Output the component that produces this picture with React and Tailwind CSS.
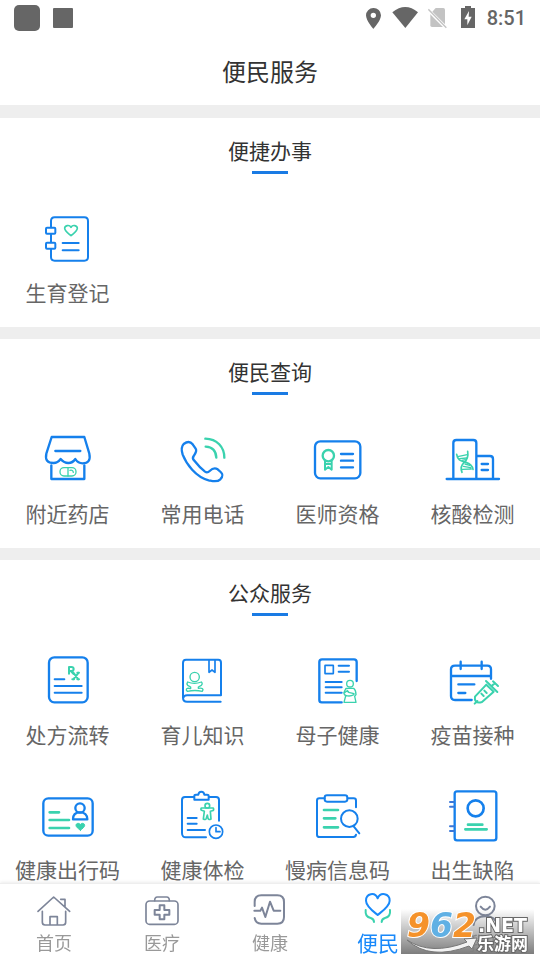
const BLUE = '#1580ec'
const GREEN = '#3ad2ae'

function ServiceIcon({ viewBox, children }) {
  return (
    <svg
      viewBox={viewBox}
      className="h-[61px] w-[61px]"
      fill="none"
      stroke={BLUE}
      strokeWidth="7"
      strokeLinecap="round"
      strokeLinejoin="round"
      aria-hidden="true"
    >
      {children}
    </svg>
  )
}

const BirthIcon = () => (
  <ServiceIcon viewBox="111 267 183 183">
    <path d="M153 322V303q0-11 11-11h89q11 0 11 11v108q0 11-11 11h-89q-11 0-11-11v-24M153 342v25" strokeWidth="6" />
    <rect x="138" y="323" width="28" height="18" rx="3" strokeWidth="6" />
    <rect x="138" y="368" width="28" height="18" rx="3" strokeWidth="6" />
    <path d="M188 369h48M188 391h48" strokeWidth="6" />
    <path d="M213 347c-8-7-19-14-19-22c0-9 14-12 19-3c5-9 19-6 19 3c0 8-11 15-19 22z" stroke={GREEN} strokeWidth="5" />
  </ServiceIcon>
)

const PharmacyIcon = () => (
  <ServiceIcon viewBox="111 30 183 183">
    <path d="M155 51h98l15 50q6 29-20 29-14 0-22-13-8 12-21 12t-23-12q-9 12-21 12-28 0-22-28z" />
    <path d="M154 136v41h99v-41M166 93h75" />
    <rect x="180" y="143" width="48" height="25" rx="12" stroke={GREEN} strokeWidth="4" />
    <path d="M204 143v25M210 151q9-2 10 6" stroke={GREEN} strokeWidth="4" />
  </ServiceIcon>
)

const PhoneIcon = () => (
  <ServiceIcon viewBox="516 30 183 183">
    <path d="M551 72c12-9 20-8 27 1l9 13c5 7-1 15-6 22q-5 7 1 13 17 22 33 34 7 5 14-2c10-10 18-9 24-5l9 8c9 8 6 14-1 22-10 10-24 5-35 3-39-10-67-49-78-77-4-13-6-23 3-32z" />
    <path d="M616 56c35 1 57 25 57 57M617 80c20 1 31 14 32 33" stroke={GREEN} />
  </ServiceIcon>
)

const DoctorIcon = () => (
  <ServiceIcon viewBox="111 30 183 183">
    <rect x="135" y="64" width="136" height="111" rx="16" />
    <path d="M213 102h36M213 122h36M213 142h36" />
    <g stroke={GREEN}>
      <circle cx="175" cy="107" r="17" />
      <path d="M165 124v25l10-8 10 8v-25M166 132h18" strokeWidth="6" />
    </g>
  </ServiceIcon>
)

const NucleicIcon = () => (
  <ServiceIcon viewBox="516 30 183 183">
    <path d="M530 177h157M550 176V69q0-9 9-9h51q9 0 9 9v107M620 108h40q9 0 9 9v59M635 132h19M635 150h19" />
    <g stroke={GREEN} strokeWidth="4">
      <path d="M560 103c3 20 15 20 28 24s19 10 21 21M593 94c3 17-1 25-11 34s-11 17-6 29" strokeWidth="5" />
      <path d="M563 110l29-6M569 116l21-2M576 121l10-2M585 132l14 4M580 139l22 4M577 148l27-1" />
    </g>
  </ServiceIcon>
)

const PrescriptionIcon = () => (
  <ServiceIcon viewBox="111 33 183 183">
    <rect x="147" y="52" width="116" height="135" rx="16" />
    <path d="M164 118h29M164 138h81M164 158h81" strokeWidth="6" />
    <path
      d="M207 101V81h7q7 0 7 6t-7 6h-7M213 94l8 8M220 98l15 20M236 98l-16 20M232 98h5M217 118h5M232 118h5"
      stroke={GREEN}
      strokeWidth="6"
    />
  </ServiceIcon>
)

const ParentingIcon = () => (
  <ServiceIcon viewBox="516 33 183 183">
    <path d="M662 185H561q-12 0-12-12V69q0-10 9-10h97q8 0 8 9v98H561q-10 0-11 8" strokeWidth="6" />
    <path d="M627 61v36l9-7 9 7V61" strokeWidth="5" />
    <g stroke={GREEN} strokeWidth="4">
      <circle cx="584" cy="111" r="14" />
      <path d="M563 126q20 8 41 0q5 5 0 10l-9 5v4q13-2 14 4l-2 5q-22-5-45 0l-3-4q0-8 13-4v-5l-9-5q-4-5 0-10z" />
    </g>
  </ServiceIcon>
)

const MotherIcon = () => (
  <ServiceIcon viewBox="111 33 183 183">
    <path d="M215 187h-60q-7 0-7-7V66q0-8 8-8h96q8 0 8 8v57" />
    <rect x="165" y="76" width="25" height="25" rx="1" strokeWidth="5" />
    <path d="M206 77h31M206 95h31M167 126h48M167 142h48M167 158h48" strokeWidth="6" />
    <g stroke={GREEN} strokeWidth="4">
      <circle cx="240" cy="131" r="10" />
      <path d="M228 145h23q7 6 7 19l-4 5 4 18h-36l5-19q-8-7-4-13zM224 158q7-7 12-1l16 4M227 166q12 5 25-2M231 151l5 5" />
    </g>
  </ServiceIcon>
)

const VaccineIcon = () => (
  <ServiceIcon viewBox="516 33 183 183">
    <path d="M605 180h-50q-12 0-12-12V88q0-11 12-11h97q11 0 11 11v28M543 108h119M572 65v22M635 65v22M565 133h48M565 159h21" />
    <g stroke={GREEN} strokeWidth="6">
      <path d="M614 191l8-8M618 185q-5-5-3-15l34-36 22 21-35 31q-12 4-18-1zM648 123l34 33M664 139l11-10M669 124l15 14M634 161l7 7M643 152l7 7" />
    </g>
  </ServiceIcon>
)

const TravelCodeIcon = () => (
  <ServiceIcon viewBox="111 18 183 183">
    <rect x="130" y="55" width="148" height="112" rx="15" />
    <circle cx="240" cy="84" r="14" />
    <path d="M219 118c0-13 8-21 21-21s22 8 22 21z" />
    <path d="M149 97h28M149 120h58M149 144h58" stroke={GREEN} strokeWidth="8" />
    <path d="M241 151c-7-6-13-10-13-15 0-7 10-8 13-2 3-6 13-5 13 2 0 5-6 9-13 15z" fill={GREEN} stroke={GREEN} strokeWidth="3" />
  </ServiceIcon>
)

const CheckupIcon = () => (
  <ServiceIcon viewBox="516 18 183 183">
    <path d="M581 51h-26q-9 0-9 9v99q0 14 13 13h59M627 51h21q9 0 9 9v62" strokeWidth="6" />
    <path d="M583 59V48q0-4 5-4h7q1-9 9-9t9 9h8q5 0 5 4v11z" strokeWidth="6" />
    <path d="M563 114h27M563 131h27M563 150h52" strokeWidth="6" />
    <circle cx="648" cy="155" r="20" strokeWidth="5" />
    <path d="M648 143v12h12" strokeWidth="5" />
    <g stroke={GREEN} strokeWidth="5">
      <circle cx="622" cy="77" r="7" />
      <path d="M604 84h36q3 7-3 8l-6 2 2 23q-7 4-9-2l-2-10-3 10q-2 6-9 2l3-23-8-3q-4-2-1-7z" />
    </g>
  </ServiceIcon>
)

const ChronicIcon = () => (
  <ServiceIcon viewBox="111 18 183 183">
    <path d="M164 55h-16q-7 0-7 7v102q0 7 8 7h101q7 0 8-7M233 55h18q7 0 7 7v20" strokeWidth="6" />
    <rect x="164" y="46" width="68" height="19" rx="7" strokeWidth="6" />
    <circle cx="238" cy="116" r="25" strokeWidth="6" />
    <path d="M251 139l17 21" strokeWidth="6" />
    <path d="M162 90h42M162 115h34M162 142h42" stroke={GREEN} strokeWidth="8" />
  </ServiceIcon>
)

const DefectIcon = () => (
  <ServiceIcon viewBox="516 18 183 183">
    <rect x="554" y="34" width="125" height="147" rx="7" />
    <circle cx="617" cy="85" r="24" strokeWidth="8" />
    <path d="M540 66h12M540 80h12M540 139h12M540 153h12" stroke="#3b78d8" strokeWidth="6" />
    <path d="M594 134h43M586 148h64" stroke={GREEN} strokeWidth="8" />
  </ServiceIcon>
)

const SECTIONS = [
  { title: '便捷办事', items: [{ label: '生育登记', Icon: BirthIcon }] },
  {
    title: '便民查询',
    items: [
      { label: '附近药店', Icon: PharmacyIcon },
      { label: '常用电话', Icon: PhoneIcon },
      { label: '医师资格', Icon: DoctorIcon },
      { label: '核酸检测', Icon: NucleicIcon },
    ],
  },
  {
    title: '公众服务',
    items: [
      { label: '处方流转', Icon: PrescriptionIcon },
      { label: '育儿知识', Icon: ParentingIcon },
      { label: '母子健康', Icon: MotherIcon },
      { label: '疫苗接种', Icon: VaccineIcon },
      { label: '健康出行码', Icon: TravelCodeIcon },
      { label: '健康体检', Icon: CheckupIcon },
      { label: '慢病信息码', Icon: ChronicIcon },
      { label: '出生缺陷', Icon: DefectIcon },
    ],
  },
]

function TabIcon({ viewBox, children }) {
  return (
    <svg
      viewBox={viewBox}
      className="h-9 w-9"
      fill="none"
      stroke="#7d8599"
      strokeWidth="6"
      strokeLinecap="round"
      strokeLinejoin="round"
      aria-hidden="true"
    >
      {children}
    </svg>
  )
}

const HomeIcon = () => (
  <TabIcon viewBox="108 54 108 108">
    <path d="M114 109l47-43 48 43M127 109v33q0 8 8 8h54q8 0 8-8v-33M150 149v-24h22v24M182 73h13v22" strokeWidth="5" />
  </TabIcon>
)

const MedicalIcon = () => (
  <TabIcon viewBox="432 54 108 108">
    <rect x="438" y="78" width="96" height="70" rx="11" strokeWidth="5" />
    <path d="M464 77q0-11 8-11h28q8 0 8 11" strokeWidth="5" />
    <path d="M479 91h14v14h15v14h-15v14h-14v-14h-15v-14h15z" />
  </TabIcon>
)

const HealthIcon = () => (
  <TabIcon viewBox="756 54 108 108">
    <path d="M764 93V81q0-20 20-20h48q20 0 20 20v45q0 20-20 20h-48q-17 0-20-17" />
    <path d="M763 107h18l5-9 10 28 14-46 11 27h20" />
  </TabIcon>
)

const ServiceTabIcon = () => (
  <TabIcon viewBox="270 54 108 108">
    <path d="M323 120c-12-10-35-26-35-43 0-22 27-27 35-7 8-20 36-15 36 7 0 17-24 33-36 43z" stroke="#1989fa" />
    <path d="M287 105c-2 17 5 22 15 24q10 3 10 12M360 105c2 17-5 22-15 24q-10 3-10 12" stroke={GREEN} />
  </TabIcon>
)

const ProfileIcon = () => (
  <TabIcon viewBox="594 54 108 108">
    <circle cx="646" cy="93" r="28" />
    <path d="M632 95q14 18 28 0M611 150q3-26 35-26t35 26" />
  </TabIcon>
)

const TABS = [
  { label: '首页', Icon: HomeIcon },
  { label: '医疗', Icon: MedicalIcon },
  { label: '健康', Icon: HealthIcon },
  { label: '便民', Icon: ServiceTabIcon, active: true },
  { label: '我的', Icon: ProfileIcon },
]

function StatusBar() {
  return (
    <div className="flex h-9 items-center justify-between px-[14px]">
      <div className="flex items-center gap-[13px]">
        <span className="h-[26px] w-[26px] rounded-[5px] bg-[#666]" />
        <span className="h-5 w-5 rounded-[1px] bg-[#666]" />
      </div>
      <div className="flex items-center gap-[10px]">
        <svg viewBox="288 18 48 72" className="h-6 w-4" fill="#666" aria-hidden="true">
          <path fillRule="evenodd" d="M310 24a22 22 0 0 0-22 22c0 16 22 41 22 41s23-25 23-41a22 22 0 0 0-23-22zm0 14a8 8 0 1 1 0 16 8 8 0 0 1 0-16z" />
        </svg>
        <svg viewBox="366 18 78 72" className="h-6 w-[26px]" fill="#666" aria-hidden="true">
          <path d="M367 37q39-32 77 0l-38 47z" />
        </svg>
        <svg viewBox="474 18 69 72" className="h-6 w-[23px]" aria-hidden="true">
          <path d="M481 42l16-18h23q5 0 5 5v47q0 5-5 5h-34q-5 0-5-5z" fill="#c3c3c3" />
          <path d="M473 28l56 56" stroke="#fff" strokeWidth="10" />
          <path d="M475 28l54 55" stroke="#c3c3c3" strokeWidth="4" />
        </svg>
        <svg viewBox="573 18 48 72" className="h-6 w-4" aria-hidden="true">
          <path d="M573 24h12v-6h18v6h12v60h-42z" fill="#666" />
          <path d="M597 33l-14 25h9v18l13-26h-9z" fill="#fff" />
        </svg>
        <span className="font-[Roboto,sans-serif] text-xl leading-6 font-medium text-[#666]">8:51</span>
      </div>
    </div>
  )
}

function Section({ title, items }) {
  return (
    <section className="bg-white pb-[17px]">
      <h2 className="pt-4 text-center text-[21px] leading-8 text-[#333]">{title}</h2>
      <div className="mx-auto mt-[5px] h-[3px] w-9 bg-[#1a7be4]" />
      <div className="mt-[35px] grid grid-cols-4 gap-y-[34px]">
        {items.map(({ label, Icon }) => (
          <button key={label} type="button" className="flex flex-col items-center gap-1">
            <Icon />
            <span className="text-[21px] leading-9 whitespace-nowrap text-[#666]">{label}</span>
          </button>
        ))}
      </div>
    </section>
  )
}

function SiteBadge() {
  return (
    <div className="absolute right-[6px] bottom-[6px] h-[45px] w-[133px] bg-gradient-to-b from-[#80808000] to-[#7d7d7d]">
      <svg viewBox="0 0 133 45" className="h-full w-full" aria-label="962.NET 乐游网">
        <path d="M6 31q24 16 60 2l-3-3 13-1-5 11-3-3q-39 15-62-6z" fill="#f2f2f2" stroke="#777" strokeWidth="1" />
        <text
          x="6"
          y="28"
          fontFamily="'DejaVu Sans', sans-serif"
          fontWeight="700"
          fontStyle="italic"
          fontSize="33"
          stroke="#fff"
          strokeWidth="2"
          paintOrder="stroke"
        >
          <tspan fill="#f5922a">9</tspan>
          <tspan fill="#60b0e4">6</tspan>
          <tspan fill="#f5922a">2</tspan>
        </text>
        <g fill="#fff" stroke="#686868" strokeWidth="2" paintOrder="stroke" fontWeight="700">
          <text x="77" y="23" fontFamily="'DejaVu Sans', sans-serif" fontSize="19">.NET</text>
          <text x="76" y="41" fontFamily="'Noto Sans CJK SC', sans-serif" fontSize="17">乐游网</text>
        </g>
      </svg>
    </div>
  )
}

function TabBar() {
  return (
    <nav className="relative grid h-[77px] shrink-0 grid-cols-5 border-t border-[#eee] bg-white shadow-[0_-1px_3px_rgba(0,0,0,0.08)]">
      {TABS.map(({ label, Icon, active }) => (
        <button key={label} type="button" className="flex flex-col items-center pt-[9px]">
          <Icon />
          <span
            className={
              active
                ? 'text-[21px] leading-[26px] text-[#1989fa]'
                : 'text-lg leading-[26px] text-[#999]'
            }
          >
            {label}
          </span>
        </button>
      ))}
      <SiteBadge />
    </nav>
  )
}

export default function App() {
  return (
    <div className="flex h-screen flex-col bg-white font-['Noto_Sans_CJK_SC',sans-serif]">
      <header className="shrink-0">
        <StatusBar />
        <h1 className="pt-[17px] pb-4 text-center text-2xl leading-9 text-[#333]">便民服务</h1>
      </header>
      <main className="flex min-h-0 flex-1 flex-col gap-3 overflow-y-auto bg-[#eee] pt-[13px] [scrollbar-width:none]">
        {SECTIONS.map((section) => (
          <Section key={section.title} {...section} />
        ))}
      </main>
      <TabBar />
    </div>
  )
}
